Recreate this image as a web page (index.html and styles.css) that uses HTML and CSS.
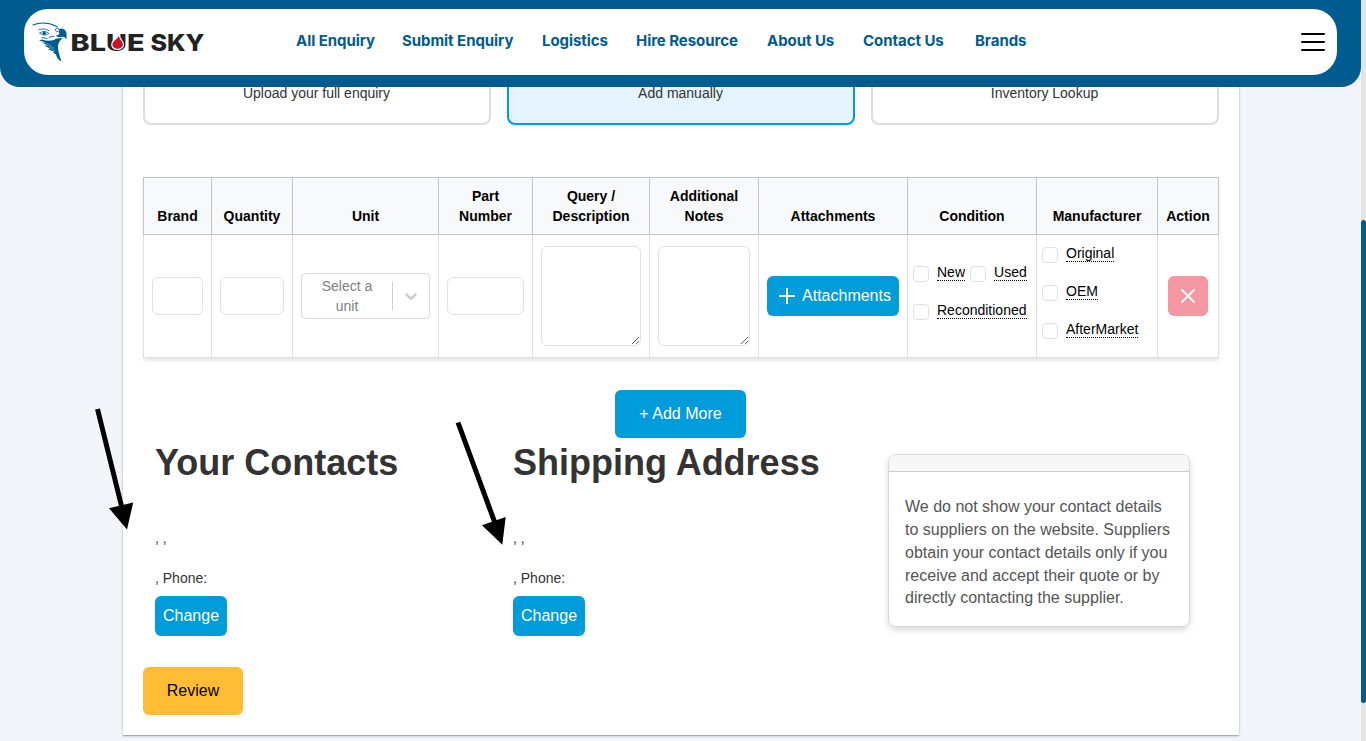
FILE: index.html
```html
<!DOCTYPE html>
<html lang="en">
<head>
<meta charset="utf-8">
<title>Blue Sky - Submit Enquiry</title>
<link rel="stylesheet" href="styles.css">
</head>
<body>
<header class="topbar">
  <div class="topbar-inner">
    <svg class="logo" width="176" height="46" viewBox="0 0 176 46" role="img" aria-label="Blue Sky">
      <g transform="translate(0 3.500)">
      <g fill="none" stroke="#005b8f" stroke-linecap="round">
        <path stroke-width="1.100" d="M1 2.500Q12-2 25 4"/>
        <path stroke-width=".8" d="M7 7Q12 5 17 8M8 10.500Q12 7 17 11Q12 14.500 8 10.500Z"/>
        <path stroke-width=".9" d="M27 7Q26 4 24 6Q22 9 26 9M17 15Q20 13 22 14M10 15L15 16"/>
      </g>
      <circle cx="12.300" cy="10.800" r="1.700" fill="#005b8f"/>
      <path fill="#005b8f" d="M24 13Q28 13 27 9Q26 6 30 6Q34 7 34.500 11L34.500 17Q33 13.500 29 14.500Q25 15.500 24 13ZM10 17Q18 20 25 16L31 15.500Q27 18 26 23Q25.500 28 29.500 39Q26 37 25 35L24 32L21 30L22 29L16 27L18 26L12 23L16 23L10 20L14 20L7 18Z"/>
      <path stroke="#fff" stroke-width=".4" d="M15 21L22 26M17 24L23 29"/>
      </g>
      <text class="logo-text" x="38.500" y="31.500" textLength="74" lengthAdjust="spacingAndGlyphs">BLUE</text>
      <text class="logo-text" x="118.500" y="31.500" textLength="54" lengthAdjust="spacingAndGlyphs">SKY</text>
      <path fill="#d0112b" stroke="#fff" stroke-width="1.200" d="M86.500 14Q87 18 89.500 21Q92.500 25 91 27.500Q89 30.500 85.500 30.500Q81 30 80 27Q79 23 83.500 20Q87 17 86.500 14Z"/>
    </svg>
    <nav class="nav">
      <a class="w-all">All Enquiry</a><a class="w-submit">Submit Enquiry</a><a class="w-log">Logistics</a><a class="w-hire">Hire Resource</a><a class="w-about">About Us</a><a class="w-contact">Contact Us</a><a class="w-brands">Brands</a>
    </nav>
    <div class="burger"><span></span><span></span><span></span></div>
  </div>
</header>

<main class="panel">
  <div class="options">
    <div class="option">Upload your full enquiry</div>
    <div class="option selected">Add manually</div>
    <div class="option">Inventory Lookup</div>
  </div>

  <table class="items">
    <colgroup><col class="c1"><col class="c2"><col class="c3"><col class="c4"><col class="c5"><col class="c6"><col class="c7"><col class="c8"><col class="c9"><col class="c10"></colgroup>
    <thead>
      <tr><th>Brand</th><th>Quantity</th><th>Unit</th><th>Part<br>Number</th><th>Query / Description</th><th>Additional Notes</th><th>Attachments</th><th>Condition</th><th>Manufacturer</th><th>Action</th></tr>
    </thead>
    <tbody>
      <tr>
        <td><input class="field" type="text"></td>
        <td><input class="field" type="text"></td>
        <td><div class="select"><span class="select-text">Select a unit</span><span class="select-sep"></span>
          <svg class="chevron" width="20" height="20" viewBox="0 0 20 20"><path fill="#ccc" d="M4.516 7.548c0.436-0.446 1.043-0.481 1.576 0l3.908 3.747 3.908-3.747c0.533-0.481 1.141-0.446 1.574 0 0.436 0.445 0.408 1.197 0 1.615-0.406 0.418-4.695 4.502-4.695 4.502-0.217 0.223-0.502 0.335-0.787 0.335s-0.570-0.112-0.789-0.335c0 0-4.287-4.084-4.695-4.502s-0.436-1.170 0-1.615z"/></svg></div></td>
        <td><input class="field" type="text"></td>
        <td><textarea class="area"></textarea></td>
        <td><textarea class="area"></textarea></td>
        <td><button class="btn attach"><svg width="16" height="16" viewBox="0 0 16 16"><path d="M8 0V16M0 8H16" stroke="#fff" stroke-width="2"/></svg>Attachments</button></td>
        <td class="checks">
          <div class="check-row"><i class="box"></i><abbr>New</abbr><i class="box second"></i><abbr>Used</abbr></div>
          <div class="check-row"><i class="box"></i><abbr>Reconditioned</abbr></div>
        </td>
        <td class="checks">
          <div class="check-row"><i class="box"></i><abbr>Original</abbr></div>
          <div class="check-row"><i class="box"></i><abbr>OEM</abbr></div>
          <div class="check-row"><i class="box"></i><abbr>AfterMarket</abbr></div>
        </td>
        <td><button class="btn remove"><svg width="14" height="14" viewBox="0 0 14 14"><path d="M.5 .5L13.500 13.500M13.500 .5L.5 13.500" stroke="#fff" stroke-width="2"/></svg></button></td>
      </tr>
    </tbody>
  </table>

  <div class="more"><button class="btn large add">+ Add More</button></div>

  <div class="details">
    <section class="contact">
      <h2>Your Contacts</h2>
      <p>, ,</p>
      <p>, Phone:</p>
      <button class="btn change">Change</button>
    </section>
    <section class="contact">
      <h2>Shipping Address</h2>
      <p>, ,</p>
      <p>, Phone:</p>
      <button class="btn change">Change</button>
    </section>
    <aside class="note">
      <div class="note-head"></div>
      <p>We do not show your contact details to suppliers on the website. Suppliers obtain your contact details only if you receive and accept their quote or by directly contacting the supplier.</p>
    </aside>
  </div>

  <button class="btn large review">Review</button>
</main>

<div class="scrollbar"><div class="thumb"></div></div>

<svg class="arrows" width="1366" height="741" viewBox="0 0 1366 741">
  <path d="M97.500 409L122 508M458 422.500L495 523" stroke="#000" stroke-width="5"/>
  <path d="M109 508.300L133.200 502.500L127 529.500ZM482 525.300L505.700 517L502.300 544.800Z"/>
</svg>
</body>
</html>
```
FILE: styles.css
```css
* { box-sizing: border-box; }
html, body { height: 741px; overflow: hidden; }
body {
  margin: 0;
  background: #f2f6fa;
  color: #333;
  font: 14px/20px "Liberation Sans", Arial, sans-serif;
}
button, input, textarea { font-family: inherit; }

.topbar {
  position: fixed;
  top: 0;
  left: 0;
  z-index: 5;
  width: 1361px;
  height: 87px;
  padding: 9px 24px 12px;
  background: #005b8f;
  border-radius: 0 0 20px 20px;
}
.topbar-inner {
  display: flex;
  align-items: center;
  height: 66px;
  padding: 0 12px 0 8px;
  background: #fff;
  border-radius: 24px;
}
.logo { flex: none; }
.logo-text { font: 800 23px Inter, sans-serif; fill: #222; }
.nav {
  display: flex;
  flex: 1;
  gap: 28px;
  margin-left: 88px;
  padding-bottom: 2px;
  color: #005b8f;
  font: 700 15px/20px Inter, sans-serif;
  letter-spacing: -0.05px;
  white-space: nowrap;
}
.w-all { width: 78px; }
.w-submit { width: 112px; }
.w-log { width: 66px; }
.w-hire { width: 103px; }
.w-about { width: 68px; }
.w-contact { width: 84px; }
.w-brands { width: 52px; }
.burger { display: flex; flex-direction: column; gap: 6px; }
.burger span { width: 24px; height: 2px; background: #000; border-radius: 1px; }

.panel {
  width: 1116px;
  height: 735px;
  margin-left: 123px;
  padding: 0 20px;
  background: #fff;
  box-shadow: 0 1px 3px rgba(0, 0, 0, .2), 0 1px 1px rgba(0, 0, 0, .2);
}
.options { display: grid; grid-template-columns: repeat(3, 1fr); gap: 16px; height: 125px; }
.option {
  display: flex;
  align-items: flex-end;
  justify-content: center;
  padding: 0 1px 20px 0;
  border: 2px solid #dedede;
  border-radius: 8px;
}
.option.selected { background: #e5f4fc; border-color: #009bdb; }

.items {
  width: 1076px;
  margin-top: 52px;
  table-layout: fixed;
  border-collapse: collapse;
  box-shadow: 0 3px 4px -1px rgba(0, 0, 0, .13);
  color: #000;
}
.c1 { width: 68px; }
.c2 { width: 81px; }
.c3 { width: 146px; }
.c4 { width: 94px; }
.c5 { width: 117px; }
.c6 { width: 109px; }
.c7 { width: 149px; }
.c8 { width: 129px; }
.c9 { width: 121px; }
.c10 { width: 61px; }
th {
  height: 57px;
  padding: 8px 4px;
  background: #f8f9fb;
  border: 1px solid #c2c5c9;
  font-weight: 700;
  vertical-align: bottom;
}
td {
  height: 123px;
  padding: 0 8px;
  background: #fff;
  border: 1px solid #dee2e6;
  text-align: center;
  vertical-align: middle;
}
.field {
  display: block;
  width: 100%;
  height: 38px;
  border: 1px solid #dee2e6;
  border-radius: 6px;
}
.area {
  display: block;
  width: 100%;
  height: 100px;
  border: 1px solid #dee2e6;
  border-radius: 6px;
}
.select {
  display: flex;
  align-items: center;
  height: 46px;
  border: 1px solid #d9dde2;
  border-radius: 4px;
  color: #808080;
}
.select-text { flex: 1; padding: 0 19px; }
.select-sep { width: 1px; height: 28px; background: #ccc; }
.chevron { margin: 0 8px; }

.btn {
  display: inline-flex;
  align-items: center;
  justify-content: center;
  height: 40px;
  padding: 0 8px;
  border: 0;
  border-radius: 6px;
  background: #009bdb;
  color: #fff;
  font-size: 16px;
}
.attach { width: 132px; gap: 7px; padding-left: 12px; vertical-align: middle; }
.remove { width: 40px; background: #f497a2; vertical-align: middle; }
.checks { padding: 0 5px 8px; text-align: left; }
.check-row {
  display: flex;
  align-items: center;
  height: 38px;
  padding-bottom: 2px;
  white-space: nowrap;
}
.box {
  width: 16px;
  height: 16px;
  margin: 3px 8px 0 0;
  border: 1px solid #dee2e6;
  border-radius: 4px;
}
.second { margin-left: 5px; }
abbr { border-bottom: 1px dotted #000; line-height: 16px; }

.more { display: flex; justify-content: center; margin-top: 32px; padding-right: 1px; }
.large { height: 48px; padding: 0 24px; }
.add { width: 131px; }

.details { display: grid; grid-template-columns: 358px 375px 302px; padding-left: 12px; }
h2 { margin: 0; padding-top: 3px; font-size: 36px; line-height: 44px; }
.contact p { margin: 0 0 20px; }
.contact h2 { margin-bottom: 43px; }
.contact p + p { margin-bottom: 8px; }
.change { width: 72px; }
.note {
  height: 173px;
  margin-top: 16px;
  overflow: hidden;
  border: 1px solid #d8d8d8;
  border-radius: 8px;
  box-shadow: 0 3px 6px rgba(0, 0, 0, .15);
  color: #555;
  font-size: 16px;
  line-height: 22.850px;
}
.note-head { height: 17px; background: #f7f7f7; border-bottom: 1px solid #ccc; }
.note p { margin: 24px 12px 0 16px; }
.review { width: 100px; margin-top: 31px; background: #ffbd35; color: #000; }

.scrollbar {
  position: fixed;
  top: 0;
  right: 0;
  width: 5px;
  height: 741px;
  padding-top: 220px;
  background: #e4e4e4;
}
.thumb { height: 483px; background: #005b8f; border-radius: 3px; }
.arrows { position: absolute; top: 0; left: 0; z-index: 6; pointer-events: none; }
```
